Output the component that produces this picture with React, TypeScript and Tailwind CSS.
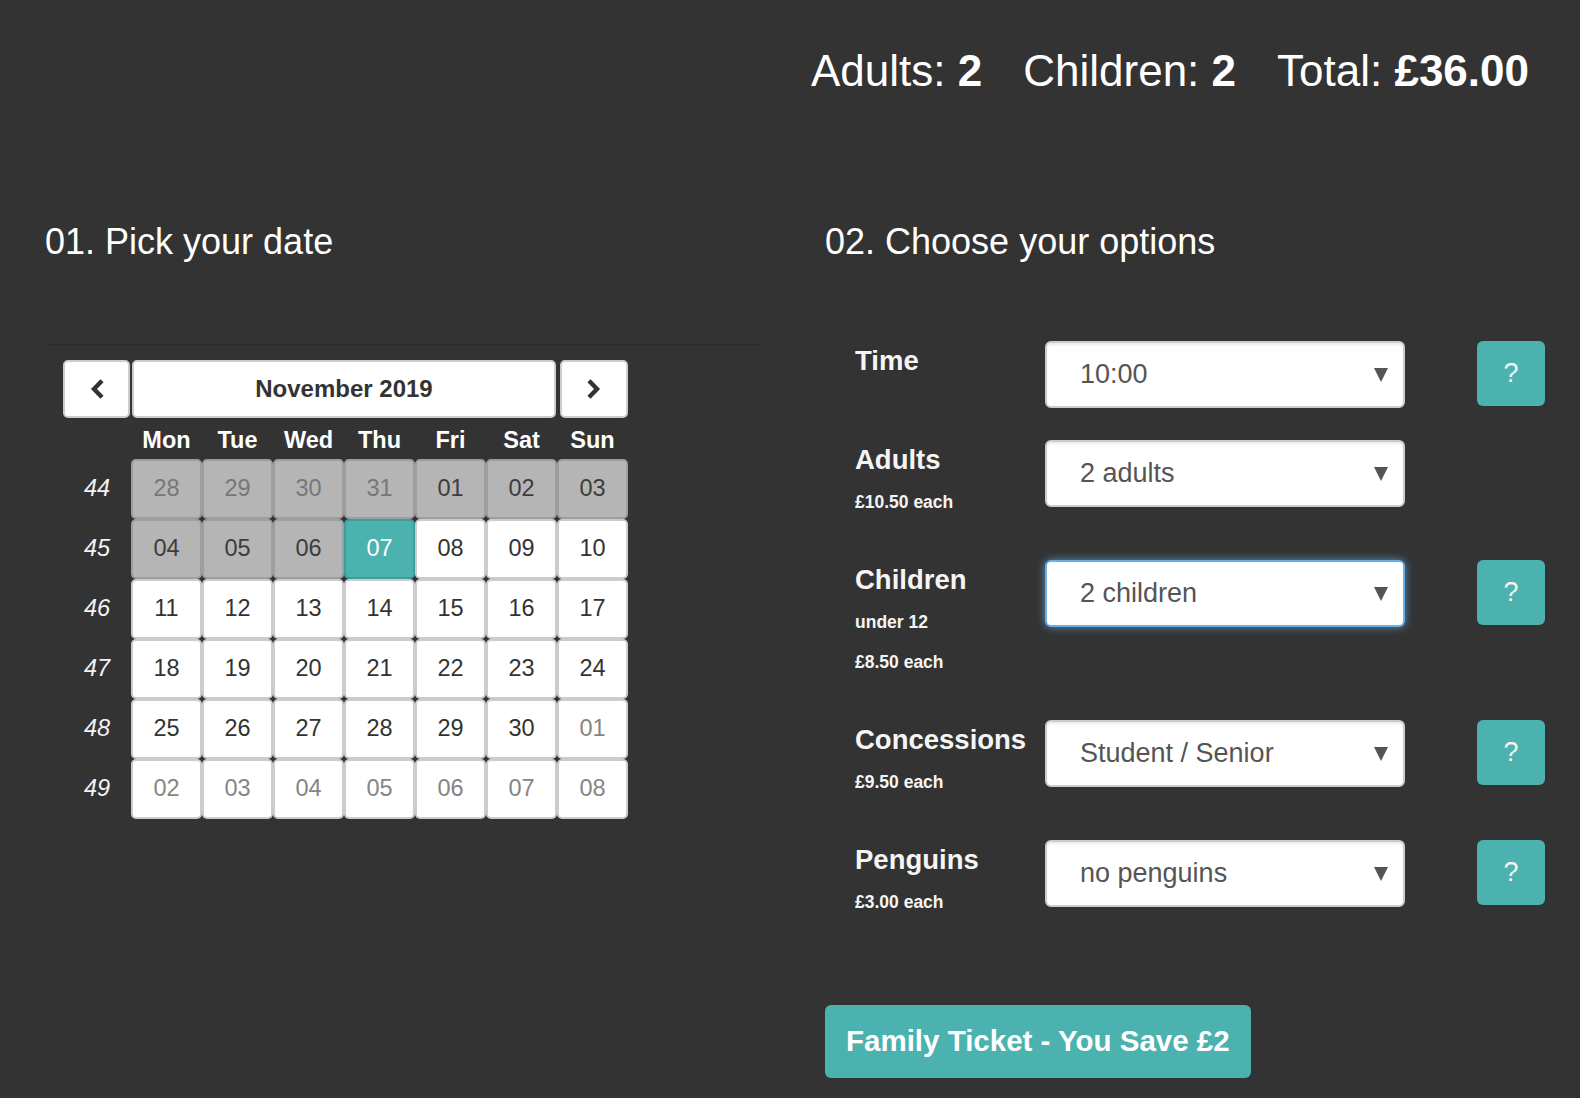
import React from "react";

// ------------------------------------------------------ DATA

type DayKind = "oldDisabled" | "disabled" | "active" | "day" | "new";

const weeks: { week: number; days: [string, DayKind][] }[] = [
    { week: 44, days: [["28", "oldDisabled"], ["29", "oldDisabled"], ["30", "oldDisabled"], ["31", "oldDisabled"], ["01", "disabled"], ["02", "disabled"], ["03", "disabled"]] },
    { week: 45, days: [["04", "disabled"], ["05", "disabled"], ["06", "disabled"], ["07", "active"], ["08", "day"], ["09", "day"], ["10", "day"]] },
    { week: 46, days: [["11", "day"], ["12", "day"], ["13", "day"], ["14", "day"], ["15", "day"], ["16", "day"], ["17", "day"]] },
    { week: 47, days: [["18", "day"], ["19", "day"], ["20", "day"], ["21", "day"], ["22", "day"], ["23", "day"], ["24", "day"]] },
    { week: 48, days: [["25", "day"], ["26", "day"], ["27", "day"], ["28", "day"], ["29", "day"], ["30", "day"], ["01", "new"]] },
    { week: 49, days: [["02", "new"], ["03", "new"], ["04", "new"], ["05", "new"], ["06", "new"], ["07", "new"], ["08", "new"]] },
];

const dayNames = ["Mon", "Tue", "Wed", "Thu", "Fri", "Sat", "Sun"];

const kindClass: Record<DayKind, string> = {
    oldDisabled: "bg-[#b5b5b5] border-[#9e9e9e] text-[#777777]",
    disabled: "bg-[#b5b5b5] border-[#9e9e9e] text-[#3d3d3d]",
    active: "bg-[#4cb2af] border-[#3d9f9c] text-white",
    day: "bg-white border-[#cccccc] text-[#333333]",
    new: "bg-white border-[#cccccc] text-[#858585]",
};

type OptionRow = { label: string; subs: string[]; value: string; help: boolean; focused?: boolean };

const optionRows: OptionRow[] = [
    { label: "Time", subs: [], value: "10:00", help: true },
    { label: "Adults", subs: ["£10.50 each"], value: "2 adults", help: false },
    { label: "Children", subs: ["under 12", "£8.50 each"], value: "2 children", help: true, focused: true },
    { label: "Concessions", subs: ["£9.50 each"], value: "Student / Senior", help: true },
    { label: "Penguins", subs: ["£3.00 each"], value: "no penguins", help: true },
];

// ------------------------------------------------------ COMPONENTS

function Chevron({ dir }: { dir: "left" | "right" }) {
    return (
        <svg width="14" height="20" viewBox="0 0 14 20">
            <polyline
                points={dir === "left" ? "12,1.8 4,10 12,18.2" : "2,1.8 10,10 2,18.2"}
                fill="none"
                stroke="#333333"
                strokeWidth="4.4"
                strokeLinejoin="miter"
            />
        </svg>
    );
}

// COMPONENT CALENDAR
function Calendar() {
    return (
        <div className="ml-[18px] w-[565px]">
            <div className="flex h-[58px]">
                <button className="w-[67px] flex items-center justify-center bg-white border-2 border-[#cccccc] rounded-[5px]">
                    <Chevron dir="left" />
                </button>
                <div className="ml-[2px] w-[424px] flex items-center justify-center bg-white border-2 border-[#cccccc] rounded-[5px] text-[24px] font-bold text-[#333333]">
                    November 2019
                </div>
                <button className="ml-[4px] w-[68px] flex items-center justify-center bg-white border-2 border-[#cccccc] rounded-[5px]">
                    <Chevron dir="right" />
                </button>
            </div>
            <div className="grid grid-cols-[68px_repeat(7,71px)] pt-[9px] pb-[4.5px]">
                <span></span>
                {dayNames.map((d) => (
                    <span key={d} className="text-center text-[23.5px] leading-[27px] font-bold text-white">{d}</span>
                ))}
            </div>
            {weeks.map((w) => (
                <div key={w.week} className="grid grid-cols-[68px_repeat(7,71px)] h-[60px]">
                    <span className="flex items-center justify-center italic text-[23.5px] text-[#f2f2f2]">{w.week}</span>
                    {w.days.map(([n, kind], i) => (
                        <span key={i} className={`flex items-center justify-center border-2 rounded-[5px] text-[23.5px] ${kindClass[kind]}`}>
                            {n}
                        </span>
                    ))}
                </div>
            ))}
        </div>
    );
}

// COMPONENT SELECT-BOX
function SelectBox({ value, focused }: { value: string; focused?: boolean }) {
    const borderClass = focused
        ? "border-[#66afe9] shadow-[0_0_9px_rgba(102,175,233,0.75)]"
        : "border-[#cccccc] shadow-[inset_0_2px_2px_rgba(0,0,0,0.08)]";
    return (
        <div className={`w-[360px] h-[67px] flex items-center justify-between bg-white border-2 rounded-[6px] pl-[33px] pr-[15px] ${borderClass}`}>
            <span className="text-[27px] text-[#555555]">{value}</span>
            <svg width="14" height="14" viewBox="0 0 14 14">
                <polygon points="0,0 14,0 7,14" fill="#555555" />
            </svg>
        </div>
    );
}

// COMPONENT OPTION-ROW
function Option({ row }: { row: OptionRow }) {
    return (
        <div className="flex items-start mb-[32px]">
            <div className="w-[190px] text-[#f5f5f5]">
                <div className="text-[27.5px] font-bold leading-[40px]">{row.label}</div>
                {row.subs.length > 0 && (
                    <div className="pt-[2px] pb-[6px]">
                        {row.subs.map((s) => (
                            <div key={s} className="text-[17.5px] font-bold leading-[40px]">{s}</div>
                        ))}
                    </div>
                )}
            </div>
            <SelectBox value={row.value} focused={row.focused} />
            {row.help && (
                <button className="ml-[72px] w-[68px] h-[65px] flex items-center justify-center bg-[#4cb2af] rounded-[6px] text-[27px] text-[#f5f5f5]">
                    ?
                </button>
            )}
        </div>
    );
}

// ------------------------------------------------------ APP

export default function App() {
    return (
        <div className="min-h-screen bg-[#333333] text-white font-['Liberation_Sans',Arial,sans-serif]">
            <div className="flex justify-end gap-[41px] pr-[51px] pt-[46px] text-[44px] leading-[50px]">
                <span>Adults: <b>2</b></span>
                <span>Children: <b>2</b></span>
                <span>Total: <b>£36.00</b></span>
            </div>

            <div className="grid grid-cols-[716px_1fr] gap-x-[64px] pl-[45px] pr-[35px] mt-[126px]">
                <section>
                    <h2 className="text-[36px] leading-[40px] text-white">01. Pick your date</h2>
                    <div className="mt-[82px] pt-[15px] border-t border-[#2c2c2c]">
                        <Calendar />
                    </div>
                </section>

                <section>
                    <h2 className="text-[36px] leading-[40px] text-white">02. Choose your options</h2>
                    <div className="mt-[79px] pl-[30px]">
                        {optionRows.map((r) => (
                            <Option key={r.label} row={r} />
                        ))}
                    </div>
                    <button className="mt-[45px] h-[73px] px-[21px] bg-[#4cb2af] rounded-[6px] text-[29.5px] font-bold text-white">
                        Family Ticket - You Save £2
                    </button>
                </section>
            </div>
        </div>
    );
}
